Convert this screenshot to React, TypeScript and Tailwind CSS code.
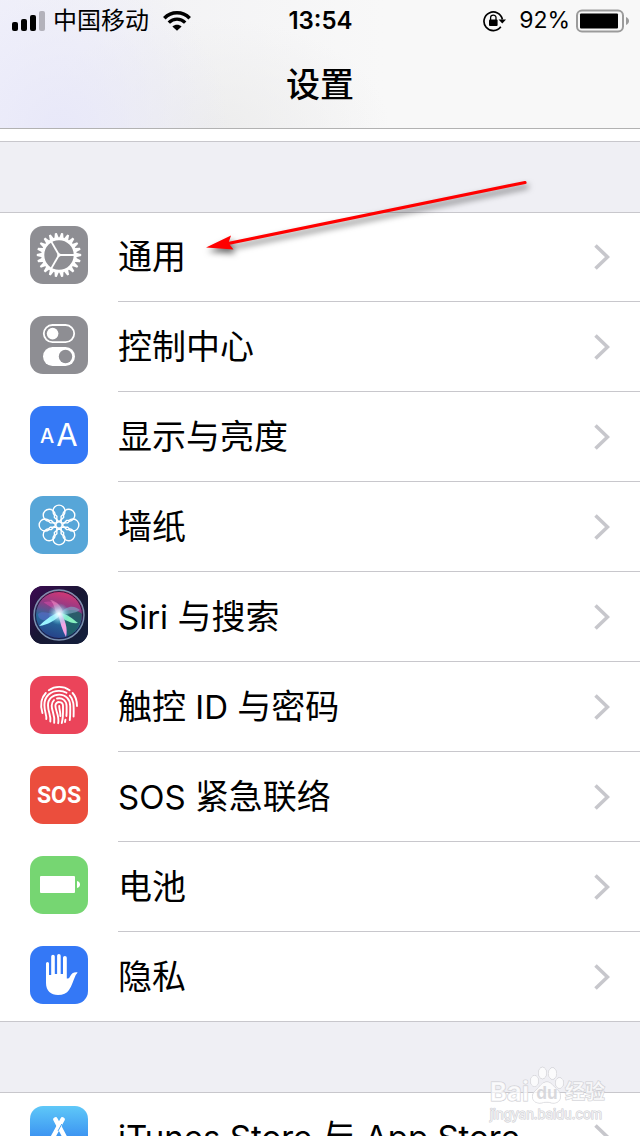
import React from 'react';

const Tile: React.FC<{ className: string; children: React.ReactNode }> = ({ className, children }) => (
  <span className={`mt-[14px] block size-[58px] shrink-0 overflow-hidden rounded-[13px] ${className}`}>
    <svg viewBox="0 0 58 58" className="size-full" aria-hidden="true">
      {children}
    </svg>
  </span>
);

const TEETH = Array.from({ length: 22 }, (_, i) => (i * 360) / 22);
const PETALS = [0, 45, 90, 135, 180, 225, 270, 315];

const GearIcon = () => (
  <Tile className="bg-[#8e8e93]">
    <g transform="translate(29 29)">
      {TEETH.map((a) => (
        <path key={a} d="M17 -2.2 L22.2 -1 L22.2 1 L17 2.2 Z" fill="#fff" transform={`rotate(${a})`} />
      ))}
      <circle r="16.2" fill="none" stroke="#fff" strokeWidth="3" />
      {[0, 120, 240].map((a) => (
        <path key={a} d="M0 0H16" stroke="#fff" strokeWidth="1.9" transform={`rotate(${a})`} />
      ))}
      <circle r="1.8" fill="#fff" />
    </g>
  </Tile>
);

const ControlIcon = () => (
  <Tile className="bg-[#8e8e93]">
    <rect x="13.8" y="9" width="30.4" height="17.2" rx="8.6" fill="none" stroke="#fff" strokeWidth="1.8" />
    <circle cx="22.6" cy="17.6" r="5.8" fill="#fff" />
    <rect x="13" y="31" width="32" height="19" rx="9.5" fill="#fff" />
    <circle cx="35.5" cy="40.5" r="6.7" fill="#8e8e93" />
  </Tile>
);

const DisplayIcon = () => (
  <Tile className="bg-[#3478f6]">
    <text x="17" y="37" textAnchor="middle" fontSize="20" fontWeight="500" fill="#fff">A</text>
    <text x="37" y="40" textAnchor="middle" fontSize="31" fontWeight="400" fill="#fff">A</text>
  </Tile>
);

const WallpaperIcon = () => (
  <Tile className="bg-[#57a6d8]">
    <g transform="translate(29 29)" fill="none" stroke="#fff" strokeWidth="1.4">
      {PETALS.map((a) => (
        <path
          key={a}
          d="M0 -3.2 L-4.6 -7.6 V-10 A6 6 0 1 1 4.6 -10 V-7.6 Z"
          transform={`rotate(${a})`}
        />
      ))}
      <circle r="3.2" />
    </g>
  </Tile>
);

const SiriIcon = () => (
  <Tile className="bg-[#1b1738]">
    <defs>
      <linearGradient id="siriBack" x1="0" y1="0" x2="1" y2="1">
        <stop offset="0" stopColor="#3d0a52" />
        <stop offset="0.5" stopColor="#171733" />
        <stop offset="1" stopColor="#13203c" />
      </linearGradient>
      <linearGradient id="siriOrb" x1="0.6" y1="0" x2="0.35" y2="1">
        <stop offset="0" stopColor="#d93672" />
        <stop offset="0.32" stopColor="#8f3b86" />
        <stop offset="0.6" stopColor="#276c9c" />
        <stop offset="1" stopColor="#263c86" />
      </linearGradient>
      <radialGradient id="siriGlow">
        <stop offset="0" stopColor="#fff" />
        <stop offset="0.35" stopColor="#c9f3ff" stopOpacity="0.75" />
        <stop offset="1" stopColor="#4fd0e0" stopOpacity="0" />
      </radialGradient>
      <filter id="siriSoft" x="-30%" y="-30%" width="160%" height="160%">
        <feGaussianBlur stdDeviation="0.7" />
      </filter>
    </defs>
    <rect width="58" height="58" fill="url(#siriBack)" />
    <circle cx="29" cy="29" r="24.5" fill="url(#siriOrb)" />
    <g filter="url(#siriSoft)">
      <path d="M29 29 C38 21 48 24 52 28 C51 40 44 48 38 51 C37 41 33 34 29 29Z" fill="#1c5f63" opacity="0.85" />
      <path d="M29 28 C22 20 14 18 14 16 C24 14 30 18 34 26Z" fill="#c64aa0" opacity="0.7" />
      <path d="M28 29 C20 28 12 24 8 28 C8 34 16 38 28 29Z" fill="#5a6dcc" opacity="0.6" />
      <path d="M27 30 C25 22 23 16 20 14 C27 15 33 21 33 29Z" fill="#f28ac4" opacity="0.6" />
      <path d="M30 28 C36 19 45 19 50 24 C45 28 37 27 30 30Z" fill="#83a4c4" opacity="0.65" />
      <path d="M29 26 C20 30 14 35 9 40 C18 39 25 34 31 29Z" fill="#9af4ff" />
      <path d="M29 27 C36 27 43 33 48 37 C40 38 34 33 28 30Z" fill="#86f0c0" />
      <path d="M28 27 C30 36 32 44 36 51 C38 42 35 34 31 27Z" fill="#f3a5e4" />
      <circle cx="29" cy="28" r="11" fill="url(#siriGlow)" />
    </g>
    <circle cx="29" cy="29" r="25" fill="none" stroke="#7f93b0" strokeWidth="1.4" />
    <circle cx="29" cy="29" r="23.5" fill="none" stroke="#1c1a3c" strokeWidth="0.9" />
  </Tile>
);

const TouchIcon = () => (
  <Tile className="bg-[#eb445a]">
    <g fill="none" stroke="#fff" strokeWidth="1.9" strokeLinecap="round">
      <path d="M18.8 14.2 C25 9.8 33.5 9.8 39.6 14.2" />
      <path d="M12.4 37 C10.3 30 10.5 22.5 15.8 17" />
      <path d="M42.6 17 C45.8 20.5 47 25 47 30" />
      <path d="M16.3 43 C16.8 39 14.4 36 14.4 29 C14.4 20 21 14.9 29 14.9 C31.8 14.9 34.4 15.6 36.5 16.8" />
      <path d="M39.8 19.6 C43.5 23.5 44 28 43.6 40.5" />
      <path d="M20.3 45.5 C21.2 39.5 18 36 18 29.3 C18 22.5 23 18.6 29.2 18.6 C36 18.6 40.2 23.5 40.2 30 C40.2 35 40.4 39 39.8 44" />
      <path d="M24.2 46.8 C25.4 39.5 21.7 35.5 21.7 29.8 C21.7 27.3 22.6 25.4 24 24.1" />
      <path d="M27 22.5 C32.5 21.2 36.6 25 36.6 30 C36.6 34 36.8 37 36.4 40" />
      <path d="M35.4 43.8 L35 46" />
      <path d="M28.2 47.2 C29.6 39.5 25.4 35 25.4 29.8 C25.4 24.8 33 24.8 33 30 C33 36 33.4 41 31.8 47" />
      <path d="M29.2 30 C29.2 34 30.6 36 30.4 40" />
    </g>
  </Tile>
);

const SosIcon = () => (
  <Tile className="bg-[#eb4e3d]">
    <text x="29" y="37" textAnchor="middle" fontSize="23" fontWeight="700" fill="#fff" className="font-[Roboto,sans-serif]">
      SOS
    </text>
  </Tile>
);

const BatteryTileIcon = () => (
  <Tile className="bg-[#76d672]">
    <rect x="10" y="20" width="35" height="17" rx="1" fill="#fff" />
    <path d="M47 25 C51 25.6 51 31.4 47 32Z" fill="#fff" />
  </Tile>
);

const HandIcon = () => (
  <Tile className="bg-[#3478f6]">
    <path
      d="M16 17.5a1.5 1.5 0 0 1 3 0V29h2.2V10.5a1.8 1.8 0 0 1 3.6 0V28h2.3V9.8a1.8 1.8 0 0 1 3.6 0V28h2.3V11.8a1.9 1.9 0 0 1 3.8 0V32.5c1.5.4 2.4-.4 3.2-2 1.6-3.2 3.7-4.7 7.5-4.2 0 1-1.3 1.6-2 3.2-2.2 4.8-3.6 10.5-6.5 14.5C36.8 47.3 33 49 28 49c-7 0-12-4-12-12Z"
      fill="#fff"
    />
  </Tile>
);

const StoreIcon = () => (
  <Tile className="bg-linear-to-b from-[#5fc8f8] to-[#2a62e8]">
    <g stroke="#fff" strokeWidth="4.6" strokeLinecap="round">
      <path d="M25.5 13.5 L40.5 42" />
      <path d="M32.5 13.5 L17 42" />
      <path d="M12 34 H46" />
    </g>
    <path d="M31.8 18 L28 25" stroke="#4fa6f2" strokeWidth="1" />
  </Tile>
);

const ROWS = [
  { label: '通用', Icon: GearIcon },
  { label: '控制中心', Icon: ControlIcon },
  { label: '显示与亮度', Icon: DisplayIcon },
  { label: '墙纸', Icon: WallpaperIcon },
  { label: 'Siri 与搜索', Icon: SiriIcon },
  { label: '触控 ID 与密码', Icon: TouchIcon },
  { label: 'SOS 紧急联络', Icon: SosIcon },
  { label: '电池', Icon: BatteryTileIcon },
  { label: '隐私', Icon: HandIcon },
];

// Latin runs are set a size smaller so they sit evenly beside the Chinese text
const Label = ({ text }: { text: string }) => (
  <span className="text-[34px] leading-[48px] whitespace-pre">
    {text.split(/([\x20-\x7e]+)/).filter(Boolean).map((part, i) =>
      /^[\x20-\x7e]/.test(part) ? (
        <span key={i} className="text-[33px]">{part}</span>
      ) : (
        part
      ),
    )}
  </span>
);

const Row: React.FC<{ label: string; Icon: React.FC; last?: boolean }> = ({ label, Icon, last }) => (
  <li>
    <a href="#" className="flex gap-[30px] pl-[30px]">
      <Icon />
      <span
        className={`flex h-[90px] flex-1 items-center justify-between border-b pr-[30px] ${
          last ? 'border-transparent' : 'border-[#c8c7cc]'
        }`}
      >
        <Label text={label} />
        <svg viewBox="0 0 16 26" className="h-[26px] w-4" fill="none" stroke="#c7c7cc" strokeWidth="3.6" aria-hidden="true">
          <path d="M1.5 1.5 L13.5 13 L1.5 24.5" />
        </svg>
      </span>
    </a>
  </li>
);

const Gap = ({ children }: { children?: React.ReactNode }) => (
  <div className="relative h-[72px] border-y border-[#c8c7cc] bg-[#efeff4]">{children}</div>
);

const StatusBar = () => (
  <div className="grid h-[41px] grid-cols-[1fr_auto_1fr] items-center pr-[11px] pl-3 text-2xl">
    <div className="flex items-center">
      <svg viewBox="0 0 33 20" className="h-5 w-[33px]" aria-hidden="true">
        <rect x="0" y="11" width="6" height="9" rx="2" />
        <rect x="9" y="8" width="6" height="12" rx="2" />
        <rect x="18" y="4" width="6" height="16" rx="2" />
        <rect x="27" y="0" width="6" height="20" rx="2" fill="#b3b2bb" />
      </svg>
      <span className="ml-2">中国移动</span>
      <svg viewBox="0 0 28 20" className="ml-[14px] h-5 w-7" fill="none" stroke="#000" aria-hidden="true">
        <path d="M1.3 7.2 C8.5 0 19.5 0 26.7 7.2" strokeWidth="3.6" />
        <path d="M5.8 11.6 C10.5 7 17.5 7 22.2 11.6" strokeWidth="3.4" />
        <path d="M14 19.8 L9.4 15.4 C12 13.2 16 13.2 18.6 15.4Z" fill="#000" stroke="none" />
      </svg>
    </div>
    <time className="font-semibold">13:54</time>
    <div className="flex items-center justify-end">
      <svg viewBox="0 0 24 22" className="h-[22px] w-6" fill="none" stroke="#000" aria-hidden="true">
        <path d="M17.8 16.8 A9.3 9.3 0 1 1 19.4 9.5" strokeWidth="1.7" />
        <path d="M15.5 9.5 H23 L19.3 13.5Z" fill="#000" stroke="none" />
        <rect x="6" y="9.5" width="8.6" height="6.5" rx="1" fill="#000" stroke="none" />
        <path d="M7.6 10 V7.5 C7.6 4.3 13 4.3 13 7.5 V10" strokeWidth="1.3" />
      </svg>
      <span className="ml-3 text-[23px]">92%</span>
      <svg viewBox="0 0 53 24" className="ml-[6px] h-6 w-[53px]" aria-hidden="true">
        <rect x="1" y="1.5" width="46" height="21" rx="5" fill="none" stroke="#9b9b9b" strokeWidth="2" />
        <rect x="4" y="4.5" width="38" height="15" rx="1" />
        <path d="M50 8 C54 9.5 54 14.5 50 16Z" fill="#9b9b9b" />
      </svg>
    </div>
  </div>
);

const Arrow = () => (
  <svg
    viewBox="0 0 340 90"
    className="absolute top-[28px] left-[200px] h-[90px] w-[340px] overflow-visible drop-shadow-[2px_4px_3px_rgba(0,0,0,0.6)]"
    aria-hidden="true"
  >
    <path d="M325 12.5 L28 73.5" stroke="#f00" strokeWidth="3.2" strokeLinecap="round" />
    <path d="M6 77.5 L31 65.5 L28.5 73 L33.5 79.5Z" fill="#f00" />
  </svg>
);

const Watermark = () => (
  <div className="absolute right-[35px] bottom-[14px] flex flex-col text-white/70 [paint-order:stroke] [-webkit-text-stroke:1px_#cdcdd2]">
    <div className="flex items-end font-bold">
      <span className="text-[26px] leading-7">Bai</span>
      <svg viewBox="0 0 36 38" className="mb-0.5 h-[38px] w-9" fill="#fff" fillOpacity="0.75" stroke="#cdcdd2" aria-hidden="true">
        <ellipse cx="5.5" cy="15" rx="4" ry="5.5" />
        <ellipse cx="13.5" cy="7" rx="4" ry="5.8" />
        <ellipse cx="23.5" cy="7.5" rx="4" ry="5.8" />
        <ellipse cx="30.5" cy="17" rx="4" ry="5.3" />
        <path d="M18 16 C22 16 24 20 27.5 23 C34 28 32 37 25 37 C21 37 20 36 18 36 C15 36 14 37 10.5 37 C3 37 1 29 7 24 C11 20.5 13 16 18 16Z" />
        <text x="18" y="33" textAnchor="middle" fontSize="17" className="fill-[#cdcdd2]" stroke="none">du</text>
      </svg>
      <span className="text-[20px] leading-7">经验</span>
    </div>
    <span className="text-[13px] leading-4">jingyan.baidu.com</span>
  </div>
);

const App: React.FC = () => {
  return (
    <div className="relative flex h-screen flex-col overflow-hidden bg-white font-['Inter','Noto_Sans_CJK_SC',sans-serif] text-black">
      <header className="h-[129px] shrink-0 border-b border-[#b2b2b2] bg-[radial-gradient(ellipse_170px_170px_at_60px_128px,#e8e8f9,transparent),radial-gradient(ellipse_180px_110px_at_210px_128px,#ededed,transparent),linear-gradient(90deg,#f1f1fa,#f3f3f5_25%,#f8f8f8_60%)]">
        <StatusBar />
        <h1 className="text-center text-[34px] leading-[88px] font-medium">设置</h1>
      </header>

      <main className="min-h-0 flex-1 overflow-hidden pt-3">
        <Gap>
          <Arrow />
        </Gap>
        <ul className="-my-px">
          {ROWS.map((row, i) => (
            <Row key={row.label} {...row} last={i === ROWS.length - 1} />
          ))}
        </ul>
        <Gap />
        <ul className="-my-px">
          <Row label="iTunes Store 与 App Store" Icon={StoreIcon} />
        </ul>
      </main>

      <Watermark />
    </div>
  );
};

export default App;
